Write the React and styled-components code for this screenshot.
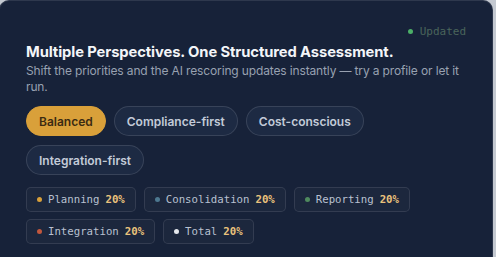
import React from "react";
import styled, { createGlobalStyle } from "styled-components";

const GlobalStyle = createGlobalStyle`
  html, body {
    margin: 0;
    padding: 0;
    background: #c4c9d1;
    overflow: hidden;
  }
  body {
    font-family: Inter, "Noto Sans", sans-serif;
  }
`;

const profiles = [
  { id: "balanced", label: "Balanced", active: true },
  { id: "compliance", label: "Compliance-first" },
  { id: "cost", label: "Cost-conscious" },
  { id: "integration", label: "Integration-first" },
];

const weights = [
  { id: "planning", label: "Planning", value: "20%", dot: "#d9a03a" },
  { id: "consolidation", label: "Consolidation", value: "20%", dot: "#4d7890" },
  { id: "reporting", label: "Reporting", value: "20%", dot: "#4f8a5e" },
  { id: "integration", label: "Integration", value: "20%", dot: "#c2573d" },
  { id: "total", label: "Total", value: "20%", dot: "#e4e7ec" },
];

function App() {
  return (
    <>
      <GlobalStyle />
      <Card>
        <StatusRow>
          <Status>
            <Dot color="#4caf68" />
            Updated
          </Status>
        </StatusRow>
        <Title>Multiple Perspectives. One Structured Assessment.</Title>
        <Subtitle>
          Shift the priorities and the AI rescoring updates instantly — try a
          profile or let it run.
        </Subtitle>
        <Chips>
          {profiles.map((p) => (
            <Chip key={p.id} $active={p.active}>
              {p.label}
            </Chip>
          ))}
        </Chips>
        <Pills>
          {weights.map((w) => (
            <Pill key={w.id}>
              <Dot color={w.dot} />
              <span>{w.label}</span>
              <Value>{w.value}</Value>
            </Pill>
          ))}
        </Pills>
      </Card>
    </>
  );
}

const Card = styled.div`
  box-sizing: border-box;
  width: 494px;
  height: 272px;
  margin-left: -1px;
  padding: 22px 20px 0 26px;
  background: #172239;
  border: 1px solid rgba(255, 255, 255, 0.1);
  border-radius: 10px;
`;

const StatusRow = styled.div`
  display: flex;
  justify-content: flex-end;
  height: 16px;
  padding-right: 6px;
`;

const Status = styled.div`
  display: flex;
  align-items: center;
  gap: 7px;
  font-family: "DejaVu Sans Mono", "Liberation Mono", monospace;
  font-size: 11px;
  color: #4a655b;
`;

const Dot = styled.span`
  width: 5px;
  height: 5px;
  border-radius: 50%;
  background: ${(p) => p.color};
  flex-shrink: 0;
`;

const Title = styled.h1`
  margin: 3px 0 0;
  font-size: 14.75px;
  line-height: 20px;
  font-weight: 700;
  color: #f3f5f8;
  letter-spacing: -0.1px;
`;

const Subtitle = styled.p`
  margin: 1px 0 0;
  font-size: 12px;
  line-height: 16px;
  letter-spacing: -0.14px;
  color: #98a1b1;
  max-width: 444px;
`;

const Chips = styled.div`
  display: flex;
  flex-wrap: wrap;
  gap: 9px 8px;
  margin-top: 11px;
  max-width: 400px;
`;

const Chip = styled.button`
  height: 30px;
  padding: 0 12px;
  border-radius: 15px;
  font-family: Inter, "Noto Sans", sans-serif;
  font-size: 12px;
  font-weight: 600;
  border: 1px solid
    ${(p) => (p.$active ? "#d9a03a" : "rgba(255, 255, 255, 0.12)")};
  background: ${(p) => (p.$active ? "#d9a03a" : "#1d2a43")};
  color: ${(p) => (p.$active ? "#3b2b12" : "#c3cbd8")};
`;

const Pills = styled.div`
  display: flex;
  flex-wrap: wrap;
  gap: 7px 8px;
  margin-top: 12px;
  max-width: 400px;
`;

const Pill = styled.div`
  box-sizing: border-box;
  height: 25px;
  display: flex;
  align-items: center;
  gap: 6px;
  padding: 0 10px;
  border-radius: 5px;
  border: 1px solid rgba(255, 255, 255, 0.1);
  background: rgba(255, 255, 255, 0.025);
  font-family: "DejaVu Sans Mono", "Liberation Mono", monospace;
  font-size: 10.7px;
  color: #b9c1d0;
`;

const Value = styled.span`
  color: #eac27c;
  font-weight: 700;
`;

export default App;
